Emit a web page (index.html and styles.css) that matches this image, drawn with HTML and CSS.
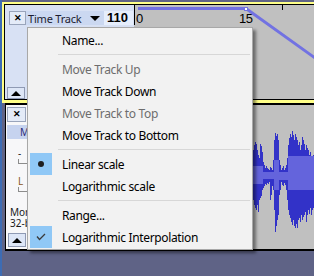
FILE: index.html
```html
<!DOCTYPE html>
<html lang="en">
<head>
    <meta charset="UTF-8">
    <meta name="viewport" content="width=device-width, initial-scale=1.0">
    <title>Time Track menu</title>
    <link rel="stylesheet" href="styles.css">
</head>
<body>

    <div class="track time-track">
        <div class="tcp">
            <div class="tcp-head">
                <span class="close-btn">&#x2715;</span>
                <span class="name-btn">Time Track <span class="drop-arrow"></span></span>
                <span class="rate">110</span>
            </div>
            <span class="collapse-btn"><span class="up-arrow"></span></span>
        </div>
        <div class="content">
            <svg class="canvas" width="180" height="94" viewBox="134 5 180 94">
                <line x1="134.5" y1="5" x2="134.5" y2="25" stroke="#000" />
                <line x1="282.5" y1="5" x2="282.5" y2="10" stroke="#000" />
                <text x="136" y="23" class="ruler-num">0</text>
                <text x="239" y="23" class="ruler-num">15</text>
                <polyline points="138,8.5 246,8.5 322,63" fill="none" stroke="#7272e2" stroke-width="3" />
                <rect x="244.5" y="7.5" width="3" height="3" fill="#fff" stroke="#7272e2" />
            </svg>
        </div>
    </div>

    <div class="track audio-track">
        <div class="tcp">
            <span class="close-btn">&#x2715;</span>
            <span class="mute-btn">Mute</span>
            <div class="slider-row">
                <span class="slider-label">-</span>
                <span class="slider-end"></span>
            </div>
            <div class="slider-row pan">
                <span class="slider-label">L</span>
                <span class="slider-end"></span>
            </div>
            <div class="track-info">Mono, 44100Hz<br>32-bit float</div>
            <span class="collapse-btn"><span class="up-arrow"></span></span>
        </div>
        <div class="content">
            <svg class="canvas" width="180" height="144" viewBox="134 105 180 144" shape-rendering="crispEdges">
                <path fill="#3232c8" d="M253,175 V150 H254 V145 H255 V142 H256 V144 H257 V150 H258 V155 H259 V158 H260 V144 H261 V146 H262 V152 H263 V162 H264 V165 H265 V168 H266 V166 H267 V168 H268 V169 H269 V170 H270 V167 H271 V168 H272 V170 H273 V160 H274 V140 H275 V133 H276 V136 H277 V134 H278 V140 H279 V160 H280 V165 H281 V170 H282 V168 H283 V166 H284 V170 H285 V168 H286 V165 H287 V158 H288 V145 H289 V138 H290 V134 H291 V137 H292 V131 H293 V135 H294 V140 H295 V134 H296 V137 H297 V140 H298 V145 H299 V142 H300 V150 H301 V145 H302 V137 H303 V140 H304 V144 H305 V150 H306 V145 H307 V148 H308 V150 H309 V155 H310 V152 H311 V156 H312 V158 H313 V155 H314 V160 H315 V205 H314 V208 H313 V210 H312 V215 H311 V208 H310 V214 H309 V210 H308 V215 H307 V222 H306 V212 H305 V215 H304 V217 H303 V220 H302 V215 H301 V222 H300 V218 H299 V220 H298 V228 H297 V224 H296 V228 H295 V226 H294 V220 H293 V225 H292 V222 H291 V218 H290 V215 H289 V210 H288 V200 H287 V190 H286 V185 H285 V183 H284 V186 H283 V185 H282 V182 H281 V190 H280 V195 H279 V215 H278 V220 H277 V226 H276 V232 H275 V210 H274 V190 H273 V186 H272 V195 H271 V200 H270 V182 H269 V184 H268 V183 H267 V185 H266 V184 H265 V186 H264 V188 H263 V190 H262 V196 H261 V198 H260 V200 H259 V212 H258 V205 H257 V210 H256 V208 H255 V205 H254 V200 H253 Z" />
                <path fill="#6464dc" d="M253,166 H263 V172 H274 V160 H279 V172 H288 V156 H315 V190 H288 V180 H279 V190 H274 V179 H263 V184 H253 Z" />
            </svg>
        </div>
    </div>

    <!-- context menu for the time track -->
    <div class="menu">
        <div class="item"><span class="mark"></span>Name...</div>
        <div class="sep"></div>
        <div class="item disabled"><span class="mark"></span>Move Track Up</div>
        <div class="item"><span class="mark"></span>Move Track Down</div>
        <div class="item disabled"><span class="mark"></span>Move Track to Top</div>
        <div class="item"><span class="mark"></span>Move Track to Bottom</div>
        <div class="sep"></div>
        <div class="item"><span class="mark checked"><span class="dot"></span></span>Linear scale</div>
        <div class="item"><span class="mark"></span>Logarithmic scale</div>
        <div class="sep"></div>
        <div class="item"><span class="mark"></span>Range...</div>
        <div class="item">
            <span class="mark checked">
                <svg width="10" height="8" viewBox="0 0 10 8"><polyline points="1,3.5 3.5,6.5 9,1" fill="none" stroke="#3a3a3a" stroke-width="1.3" /></svg>
            </span>Logarithmic Interpolation
        </div>
    </div>

</body>
</html>
```

FILE: styles.css
```css
body {
    margin: 0;
    padding-top: 2px;
    height: 276px;
    box-sizing: border-box;
    overflow: hidden;
    background: #5f6386;
    border-left: 2px solid #3d6cb4;
    font-family: "Noto Sans", "Liberation Sans", sans-serif;
    color: #000;
    position: relative;
}
.track {
    display: flex;
    width: 330px;
}
.time-track {
    height: 101px;
    box-sizing: border-box;
    border: 2px solid #ffff88;
    border-bottom-width: 3px;
    box-shadow: inset 0 0 0 1px #000;
    padding: 1px;
}
.audio-track {
    margin-left: 3px;
    height: 148px;
    box-sizing: border-box;
    border: 2px solid #000;
    border-left-width: 1px;
}
.tcp {
    display: flex;
    flex-direction: column;
    align-items: flex-start;
}
.time-track .tcp {
    width: 129px;
    background: #d8e1f4;
}
.audio-track .tcp {
    width: 128px;
    background: #f7f7f9;
}
.content {
    flex: 1;
    background: #c0c0c0;
    overflow: hidden;
}
.canvas {
    display: block;
}
.ruler-num {
    font-family: "Liberation Sans", sans-serif;
    font-size: 13px;
    letter-spacing: -0.5px;
    fill: #000;
}

.tcp-head {
    display: flex;
    margin: 6px 0 0 4px;
    height: 14px;
}
.close-btn {
    width: 17px;
    height: 14px;
    box-sizing: border-box;
    border: 1px solid #99a4bb;
    background: #e4ebf8;
    font-size: 9px;
    font-weight: bold;
    line-height: 12px;
    text-align: center;
}
.name-btn {
    width: 78px;
    display: flex;
    align-items: center;
    padding-left: 2px;
    box-sizing: border-box;
    background: #cbd8f1;
    font-size: 11px;
    letter-spacing: -0.2px;
    color: #1c1c30;
}
.drop-arrow {
    margin-left: 8px;
    border-left: 5px solid transparent;
    border-right: 5px solid transparent;
    border-top: 5px solid #000;
}
.rate {
    width: 29px;
    background: #e6eefc;
    font-family: "Liberation Sans", sans-serif;
    font-size: 13px;
    font-weight: bold;
    line-height: 14px;
    padding-left: 3px;
    box-sizing: border-box;
}
.collapse-btn {
    margin: auto 0 0 2px;
    width: 18px;
    height: 12px;
    box-sizing: border-box;
    border: 1px solid #8f9ab4;
    background: #dde6f7;
    display: flex;
    justify-content: center;
    align-items: center;
}
.up-arrow {
    border-left: 5px solid transparent;
    border-right: 5px solid transparent;
    border-bottom: 5px solid #000;
}
.audio-track .close-btn {
    margin: 2px 0 0 1px;
    width: 19px;
    height: 15px;
}
.audio-track .collapse-btn {
    margin-bottom: 2px;
    height: 14px;
}
.mute-btn {
    margin: 3px 0 0 1px;
    width: 60px;
    height: 14px;
    padding-left: 13px;
    box-sizing: border-box;
    background: #c6d3ef;
    font-size: 10px;
    line-height: 14px;
    color: #2c2c78;
}
.slider-row {
    margin: 9px 0 0 12px;
    height: 14px;
}
.slider-row.pan {
    margin-top: 14px;
}
.slider-label {
    display: block;
    font-size: 10px;
    line-height: 10px;
    color: #202020;
}
.pan .slider-label {
    color: #8a5424;
}
.slider-end {
    display: block;
    margin-top: 1px;
    width: 8px;
    height: 4px;
    border-left: 1px solid #8c8c8c;
    border-bottom: 1px solid #8c8c8c;
}
.track-info {
    margin: 17px 0 0 4px;
    font-size: 10px;
    line-height: 11px;
    color: #1a1a1a;
}

.menu {
    position: absolute;
    left: 25px;
    top: 27px;
    width: 226px;
    padding: 1px 0;
    box-sizing: border-box;
    background: #f2f2f2;
    border: 1px solid #a8a8a8;
    box-shadow: 3px 3px 3px rgba(0, 0, 0, 0.45);
    font-size: 12px;
    letter-spacing: -0.35px;
}
.item {
    display: flex;
    align-items: center;
    height: 22px;
    margin: 0 2px;
}
.item.disabled {
    color: #6d6d6d;
}
.mark {
    width: 22px;
    height: 22px;
    margin-right: 10px;
    display: flex;
    justify-content: center;
    align-items: center;
}
.mark.checked {
    background: #90c8f6;
}
.dot {
    width: 6px;
    height: 6px;
    border-radius: 50%;
    background: #1e1e1e;
}
.sep {
    height: 1px;
    margin: 3px 2px 3px 30px;
    background: #d7d7d7;
}
```
